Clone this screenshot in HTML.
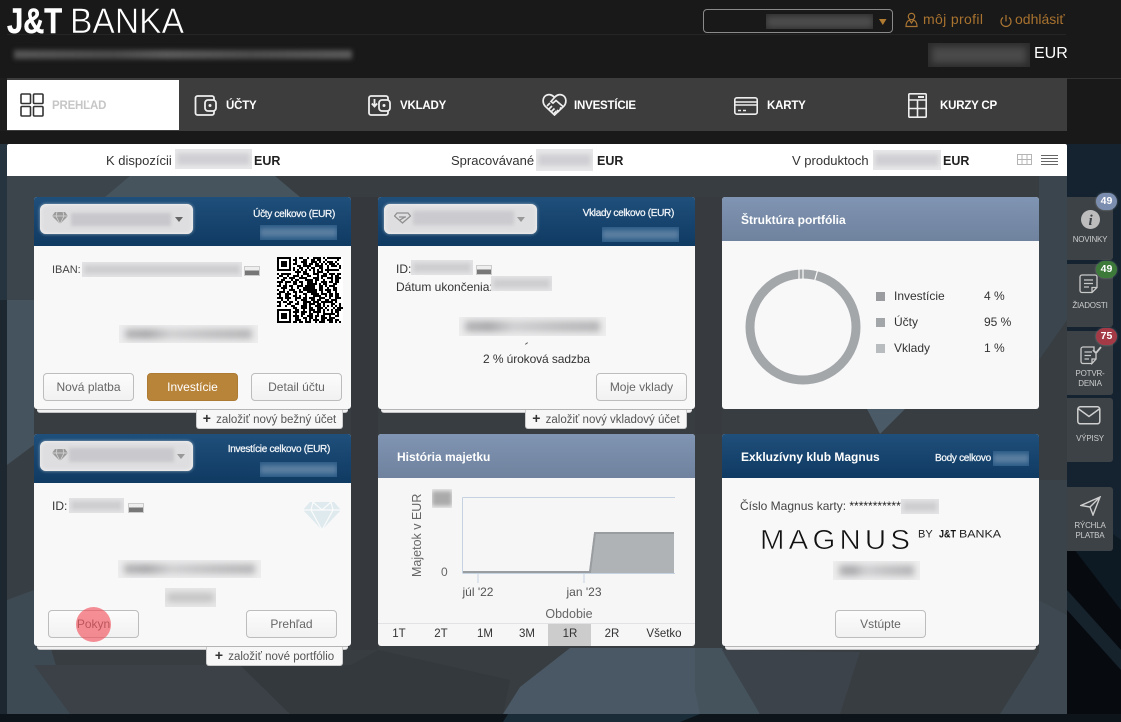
<!DOCTYPE html>
<html lang="sk"><head><meta charset="utf-8"><title>J&amp;T Banka</title>
<style>
*{box-sizing:border-box}
html,body{margin:0;padding:0;width:1121px;height:722px;overflow:hidden;background:#0e1a23}
body{position:relative;font-family:"Liberation Sans",sans-serif;font-size:12px;color:#333}
.a,.t,.btn,.b,.card,.tab{position:absolute}
.t{white-space:nowrap;line-height:18px}
.b{background:#e6e6e8;overflow:hidden}
.b i{position:absolute;left:6px;right:6px;top:22%;bottom:22%;background:linear-gradient(90deg,#b4b4b6,#a8a8aa 18%,#cfcfd1 36%,#bdbdbf 70%,#b4b4b6);filter:blur(3.5px);display:block}
.b.f i{top:22%;bottom:22%;left:2px;right:2px;background:#d2d2d5;filter:blur(2.5px)}
.b.h{background:#2a5a85}.b.h i{background:#5a7ea0;top:20%;bottom:20%;left:0;right:0;filter:blur(2.5px)}
.card{background:#f8f8f9;border-radius:3px}
.st{position:absolute;left:3px;right:3px;top:212px;height:4px;background:#f2f2f3;border-top:1px solid #b5b5b7;border-bottom:1px solid #c4c4c6;border-radius:0 0 3px 3px}
.hd{position:absolute;left:0;top:0;right:0;height:49px;background:linear-gradient(#1f4f7b,#0f3a62);border-radius:3px 3px 0 0}
.hg{position:absolute;left:0;top:0;right:0;height:44px;background:linear-gradient(#8095b3,#6f829e);border-radius:3px 3px 0 0}
.hb{height:44px}
.sel{position:absolute;left:6px;top:7px;width:153px;height:30px;background:#dedee0;border-radius:6px;box-shadow:inset 0 0 5px #f4f4f4,0 0 3px rgba(255,255,255,.55)}
.btn{height:28px;width:91px;border:1px solid #bdbdbd;border-radius:4px;background:linear-gradient(#fcfcfc,#f1f1f1);color:#666;font-size:12px;line-height:26px;text-align:center}
.tab{height:19px;background:#f7f7f8;border:1px solid #ccc;border-top:0;border-radius:0 0 3px 3px;color:#555;font-size:11.5px;line-height:17px;text-align:center;white-space:nowrap}
.tab b{color:#333;font-size:14px;font-weight:700;margin-right:2px}
.hr{font-size:10px;color:#f4f7fa;text-align:right;letter-spacing:-.3px;-webkit-text-stroke:.25px #f4f7fa}
.ht{font-size:12px;font-weight:700;color:#fff}
.nav{font-size:11.5px;font-weight:700;color:#fff;line-height:18px;letter-spacing:-.2px}
.sum{font-size:13px;color:#333;top:152px}
.eur{font-size:12.5px;font-weight:700;color:#222;top:152px}
.side{position:absolute;left:1067px;width:46px;background:#3d4246;border-radius:0 3px 3px 0;color:#ccc;font-size:8px;line-height:10px;text-align:center;letter-spacing:-.2px}
.bd{position:absolute;width:21px;height:17px;border-radius:9px;color:#fff;font-size:10.5px;font-weight:700;line-height:16px;text-align:center;box-shadow:0 0 2px rgba(255,255,255,.35)}
.per{font-size:11.5px;color:#333;text-align:center;width:42px;line-height:23px;height:23px}
.lg{font-size:12px;color:#333}
</style></head><body>

<!-- background -->
<svg class="a" style="left:0;top:0" width="1121" height="722" viewBox="0 0 1121 722">
<rect width="1121" height="722" fill="#0e1a23"/>
<polygon points="0,144 7,144 7,300 0,300" fill="#26343f"/>
<polygon points="0,300 7,300 7,722 0,722" fill="#1c2730"/>
<polygon points="1067,144 1121,144 1121,540 1067,500" fill="#14232f"/>
<polygon points="1067,540 1121,610 1121,722 1067,722" fill="#070b10"/>
<polygon points="1067,590 1121,650 1121,670 1067,610" fill="#16222c"/>
<rect x="0" y="714" width="1121" height="8" fill="#0d151b"/>
<polygon points="503,722 508,714 700,714 680,722" fill="#1a2c38"/>
<!-- panel -->
<rect x="7" y="144" width="1060" height="570" rx="3" fill="#383d41"/>
<polygon points="7,176 130,176 34,300 7,300" fill="#3c454c"/>
<polygon points="130,176 275,176 300,197 105,197" fill="#46545d"/>
<polygon points="7,300 34,300 34,445 7,465" fill="#45535e"/>
<polygon points="7,465 34,445 34,590 7,600" fill="#383f44"/>
<polygon points="7,600 34,590 70,714 7,714" fill="#3e4a53"/>
<polygon points="34,665 240,665 290,714 70,714" fill="#3b4147"/>
<polygon points="240,665 351,665 378,650 510,680 503,714 290,714" fill="#34393d"/>
<polygon points="351,197 378,197 378,650 351,650" fill="#35393d"/>
<polygon points="695,197 722,197 722,434 695,434" fill="#373b3f"/>
<polygon points="503,714 520,687 570,648 695,648 695,690 715,714" fill="#495864"/>
<polygon points="695,648 722,648 760,714 700,714 695,690" fill="#45535d"/>
<polygon points="760,714 722,650 860,652 840,714" fill="#3c434a"/>
<polygon points="1039,600 1067,615 1067,714 1000,714 1039,652" fill="#3d4850"/>
<polygon points="1039,176 1067,176 1067,320 1039,360" fill="#3b454d"/>
<polygon points="1039,480 1067,480 1067,615 1039,600" fill="#3a434a"/>
<polygon points="867,409 905,409 880,434" fill="#4a5a66"/>
</svg>

<!-- header -->
<div class="a" style="left:0;top:0;width:1121px;height:144px;background:#191919"></div>
<div class="a" style="left:7px;top:34px;width:1059px;height:1px;background:#252525"></div>
<svg class="a" style="left:0;top:0" width="200" height="44" viewBox="0 0 200 44">
<text x="7" y="33" font-family="Liberation Sans" font-weight="700" font-size="35" fill="#fff" stroke="#fff" stroke-width=".5" textLength="55" lengthAdjust="spacingAndGlyphs">J&amp;T</text>
<text x="70" y="33" font-family="Liberation Sans" font-size="35" fill="#fff" stroke="#191919" stroke-width=".6" textLength="114" lengthAdjust="spacingAndGlyphs">BANKA</text>
</svg>
<div class="a" style="left:14px;top:50px;width:338px;height:9px;background:linear-gradient(90deg,#555,#4a4a4a 30%,#5a5a5a 45%,#4c4c4c 70%,#595959);filter:blur(2.5px)"></div>
<div class="a" style="left:703px;top:9px;width:190px;height:24px;border:1px solid #8a8a8a;border-radius:4px;background:#191919"></div>
<div class="b" style="left:766px;top:14px;width:107px;height:15px;background:#2b2b2b"><i style="top:10%;bottom:10%;left:0;right:0;background:#4d4d4d"></i></div>
<svg class="a" style="left:878px;top:18px" width="10" height="8"><path d="M1 1h7.500L4.800 7z" fill="#b07a30"/></svg>
<svg class="a" style="left:905px;top:12px" width="13" height="16" viewBox="0 0 13 16" fill="none" stroke="#ab7633" stroke-width="1.2"><circle cx="6.500" cy="4.500" r="3.200"/><path d="M4.500 8C2 9 1 11 1 14.500h11C12 11 11 9 8.500 8L6.500 11z"/></svg>
<div class="t" style="left:923px;top:10px;font-size:14px;letter-spacing:.35px;color:#a8722f">môj profil</div>
<svg class="a" style="left:999px;top:14px" width="14" height="15" viewBox="0 0 14 15" fill="none" stroke="#ab7633" stroke-width="1.2"><path d="M4 3.500a5 5 0 1 0 6 0M7 1v6.500"/></svg>
<div class="t" style="left:1015px;top:10px;font-size:14px;color:#a8722f">odhlásiť</div>
<div class="b" style="left:928px;top:43px;width:102px;height:24px;background:#2c2c2c"><i style="left:4px;right:4px;top:15%;bottom:15%;background:#4a4a4a"></i></div>
<div class="t" style="left:1034px;top:45px;font-size:16px;color:#fff">EUR</div>

<!-- nav -->
<div class="a" style="left:0;top:78px;width:1121px;height:1px;background:#333"></div>
<div class="a" style="left:0;top:78px;width:1067px;height:53px;background:#3d3d3d"></div>
<div class="a" style="left:0;top:78px;width:7px;height:53px;background:#1d1d1d"></div>
<div class="a" style="left:7px;top:80px;width:172px;height:50px;background:#fff"></div>
<svg class="a" style="left:20px;top:93px" width="24" height="24" fill="none" stroke="#333" stroke-width="1.600"><rect x="1" y="1" width="9.500" height="9.500" rx="1"/><rect x="13.500" y="1" width="9.500" height="9.500" rx="1"/><rect x="1" y="13.500" width="9.500" height="9.500" rx="1"/><rect x="13.500" y="13.500" width="9.500" height="9.500" rx="1"/></svg>
<div class="t nav" style="left:52px;top:97px;color:#c6c6c6">PREHĽAD</div>
<svg class="a" style="left:194px;top:94px" width="24" height="23" fill="none" stroke="#eee" stroke-width="1.800"><path d="M20 6V4a2 2 0 0 0-2-2H3.500A2 2 0 0 0 1.500 4v15a2 2 0 0 0 2 2H18a2 2 0 0 0 2-2v-2"/><rect x="11" y="6" width="11" height="11" rx="3"/><circle cx="16" cy="11.500" r="1.500" fill="#eee" stroke="none"/></svg>
<div class="t nav" style="left:226px;top:97px">ÚČTY</div>
<svg class="a" style="left:368px;top:94px" width="24" height="23" fill="none" stroke="#eee" stroke-width="1.800"><path d="M20 6V4a2 2 0 0 0-2-2H3A2 2 0 0 0 1 4v15a2 2 0 0 0 2 2h15a2 2 0 0 0 2-2v-2"/><rect x="11" y="6" width="11" height="11" rx="3"/><circle cx="16" cy="11.500" r="1.500" fill="#eee" stroke="none"/><path d="M6.500 5v7M3.800 9.500l2.700 3 2.700-3"/></svg>
<div class="t nav" style="left:400px;top:97px">VKLADY</div>
<svg class="a" style="left:542px;top:93px" width="25" height="23" viewBox="0 0 25 23" fill="none" stroke="#eee" stroke-width="1.700"><path d="M12.500 4.500C10 1.500 6.500 .8 3.800 2.600 .6 4.800.2 9.500 3 13l9.500 9 9.500-9c2.800-3.500 2.400-8.200-.8-10.400-2.700-1.800-6.200-1.100-8.700 1.900L9 8.500l2 1.500 3-2.500 7 6"/><path d="M5 13l3-3M7 16l3-3M9.500 18.500l3-3M12 20.500l2.500-2.500M15 17l2 2M18 14.500l1.500 1.500"/></svg>
<div class="t nav" style="left:574px;top:97px">INVESTÍCIE</div>
<svg class="a" style="left:734px;top:97px" width="24" height="18" fill="none" stroke="#eee" stroke-width="1.600"><rect x=".8" y=".8" width="22.400" height="16.400" rx="2"/><path d="M1 5h22M1 8h22"/><path d="M4 13.500h3M9 13.500h3" stroke-width="1.500"/></svg>
<div class="t nav" style="left:767px;top:97px">KARTY</div>
<svg class="a" style="left:908px;top:93px" width="20" height="25" fill="none" stroke="#eee" stroke-width="1.600"><rect x=".8" y=".8" width="17.400" height="23.400" rx="1"/><path d="M1 7h17M1 15.500h17M9.500 7v17"/><path d="M10 4h6" stroke-width="2"/></svg>
<div class="t nav" style="left:940px;top:97px">KURZY CP</div>

<!-- sub bar -->
<div class="a" style="left:7px;top:144px;width:1060px;height:32px;background:#fff;border-radius:2px 2px 0 0"></div>
<div class="t sum" style="left:106px">K dispozícii</div>
<div class="b f" style="left:175px;top:149px;width:77px;height:20px;background:#e8e8ea"><i style="background:#d0d0d4"></i></div>
<div class="t eur" style="left:254px">EUR</div>
<div class="t sum" style="left:451px">Spracovávané</div>
<div class="b f" style="left:536px;top:149px;width:57px;height:22px;background:#e8e8ea"><i style="background:#d0d0d4"></i></div>
<div class="t eur" style="left:597px">EUR</div>
<div class="t sum" style="left:792px">V produktoch</div>
<div class="b f" style="left:873px;top:150px;width:68px;height:20px;background:#e8e8ea"><i style="background:#d0d0d4"></i></div>
<div class="t eur" style="left:943px">EUR</div>
<svg class="a" style="left:1017px;top:154px" width="15" height="11"><rect width="15" height="11" fill="#b4b4b4"/><path d="M1 1h3.500v4H1zM5.500 1h4v4h-4zM10.500 1H14v4h-3.500zM1 6h3.500v4H1zM5.500 6h4v4h-4zM10.500 6H14v4h-3.500z" fill="#fff"/></svg>
<svg class="a" style="left:1041px;top:155px" width="17" height="10" stroke="#666" stroke-width="1"><path d="M0 .5h17M0 3.500h17M0 6.500h17M0 9.500h17"/></svg>

<!-- CARD 1 -->
<div class="card" style="left:34px;top:197px;width:317px;height:212px">
 <div class="st"></div>
 <div class="hd"></div>
 <div class="sel"></div>
 <svg class="a" style="left:18px;top:15px" width="16" height="12" viewBox="0 0 16 12" fill="#9a9a9a"><path d="M3 0h10l3 4-8 8-8-8z"/><path d="M0 4h16M5 0L4 4l4 8 4-8-1-4" stroke="#ddd" stroke-width=".7" fill="none"/></svg>
 <div class="a" style="left:37px;top:16px;width:100px;height:13px;background:#c8c8cc;filter:blur(1.5px)"></div>
 <svg class="a" style="left:141px;top:20px" width="9" height="6"><path d="M0 0h8L4 5z" fill="#666"/></svg>
 <div class="t hr" style="right:16px;top:9px">Účty celkovo (EUR)</div>
 <div class="b h" style="left:226px;top:28px;width:77px;height:15px"><i></i></div>
 <div class="t" style="left:18px;top:64px;font-size:11px;color:#444">IBAN:</div>
 <div class="b f" style="left:48px;top:65px;width:160px;height:15px;background:#e4e4e6"><i style="background:#cdcdd0"></i></div>
 <div class="a" style="left:210px;top:69px;width:16px;height:10px;background:linear-gradient(#eee 45%,#777 45%);border:1px solid #ccc"></div>
 <svg class="a" style="left:243px;top:60px;background:#fff" width="66" height="66" viewBox="0 0 33 33" fill="none" shape-rendering="crispEdges"><path stroke="#000" d="M0 .5h7m2 0h1m1 0h2m2 0h1m2 0h4m1 0h1m1 0h7M0 1.500h1m5 0h1m1 0h2m3 0h2m2 0h2m1 0h2m2 0h1m5 0h1M0 2.500h1m1 0h3m1 0h1m2 0h1m2 0h3m2 0h3m1 0h1m1 0h1m1 0h3m1 0h1M0 3.500h1m1 0h3m1 0h1m1 0h2m3 0h2m1 0h2m1 0h2m1 0h1m1 0h1m1 0h3m1 0h1M0 4.500h1m1 0h3m1 0h1m3 0h2m1 0h4m2 0h4m2 0h1m1 0h3m1 0h1M0 5.500h1m5 0h1m1 0h1m2 0h2m2 0h1m1 0h2m2 0h2m2 0h1m5 0h1M0 6.500h7m1 0h1m1 0h1m1 0h1m1 0h1m1 0h1m1 0h1m1 0h1m1 0h1m1 0h7M9 7.500h3m1 0h2m3 0h1m1 0h3m2 0h1M0 8.500h1m1 0h5m3 0h1m2 0h3m2 0h3m2 0h2m1 0h3m1 0h2M1 9.500h2m2 0h1m2 0h3m1 0h1m2 0h2m3 0h1m1 0h3m2 0h1m1 0h2M0 10.500h1m2 0h2m1 0h3m2 0h4m3 0h3m1 0h1m2 0h3m1 0h3M2 11.500h2m3 0h1m1 0h2m3 0h4m1 0h2m2 0h1m3 0h1m1 0h2M0 12.500h3m1 0h3m1 0h2m1 0h2m2 0h3m1 0h1m2 0h3m1 0h2m1 0h2M1 13.500h1m2 0h1m3 0h2m2 0h1m2 0h5m1 0h1m1 0h2m3 0h2M0 14.500h2m1 0h2m1 0h2m2 0h3m1 0h5m2 0h2m1 0h1m1 0h3M2 15.500h3m2 0h1m2 0h1m2 0h6m2 0h2m2 0h1m2 0h2M0 16.500h1m2 0h1m2 0h3m2 0h1m1 0h7m1 0h2m1 0h3m1 0h2M1 17.500h3m1 0h1m2 0h2m1 0h2m2 0h5m2 0h1m2 0h2m2 0h1M0 18.500h2m2 0h3m2 0h1m3 0h2m2 0h4m1 0h3m1 0h2m1 0h2M1 19.500h1m2 0h2m2 0h2m1 0h1m2 0h1m3 0h4m2 0h1m1 0h2m1 0h2M0 20.500h3m1 0h3m2 0h3m1 0h2m1 0h3m2 0h3m2 0h1m2 0h3M2 21.500h1m2 0h1m3 0h1m2 0h3m2 0h2m1 0h2m2 0h2m1 0h3M0 22.500h2m1 0h2m1 0h2m2 0h1m2 0h4m1 0h3m1 0h6m1 0h1M1 23.500h1m3 0h2m2 0h2m2 0h2m1 0h3m1 0h2m1 0h1m3 0h2m2 0h1M0 24.500h2m2 0h1m2 0h2m3 0h3m1 0h1m2 0h3m1 0h1m1 0h1m1 0h1m1 0h1m1 0h1M8 25.500h2m2 0h3m1 0h2m2 0h3m1 0h1m3 0h1m1 0h3M0 26.500h7m2 0h2m2 0h1m2 0h3m1 0h2m1 0h1m1 0h1m1 0h1m1 0h3M0 27.500h1m5 0h1m1 0h3m1 0h3m1 0h1m1 0h4m1 0h1m3 0h1m1 0h2M0 28.500h1m1 0h3m1 0h1m2 0h1m2 0h2m2 0h2m2 0h1m2 0h6m1 0h1M0 29.500h1m1 0h3m1 0h1m1 0h3m1 0h1m2 0h3m1 0h2m1 0h2m2 0h1m2 0h2M0 30.500h1m1 0h3m1 0h1m2 0h2m2 0h2m1 0h2m1 0h1m2 0h3m1 0h3M0 31.500h1m5 0h1m2 0h3m2 0h1m1 0h1m1 0h3m1 0h2m1 0h3m1 0h2M0 32.500h7m1 0h2m1 0h2m1 0h3m2 0h1m1 0h3m2 0h2m1 0h1m1 0h1"/></svg>
 <div class="b" style="left:85px;top:128px;width:139px;height:18px;background:#eeeeef"><i></i></div>
 <div class="btn" style="left:9px;top:176px">Nová platba</div>
 <div class="btn" style="left:113px;top:176px;background:#b8843a;border-color:#ad7b34;color:#fff">Investície</div>
 <div class="btn" style="left:217px;top:176px">Detail účtu</div>
</div>
<div class="tab" style="left:196px;top:410px;width:147px"><b>+</b> založiť nový bežný účet</div>

<!-- CARD 2 -->
<div class="card" style="left:378px;top:197px;width:317px;height:212px">
 <div class="st"></div>
 <div class="hd"></div>
 <div class="sel"></div>
 <svg class="a" style="left:16px;top:15px" width="17" height="12" viewBox="0 0 17 12" fill="none" stroke="#8f8f8f" stroke-width="1.300"><path d="M3 1h11l2.500 3L8.500 11 .5 4zM5 5h7M6 8l5-3"/></svg>
 <div class="a" style="left:35px;top:14px;width:101px;height:14px;background:#cbcbcf;filter:blur(1.5px)"></div>
 <svg class="a" style="left:139px;top:20px" width="9" height="6"><path d="M0 0h8L4 5z" fill="#999"/></svg>
 <div class="t hr" style="right:21px;top:8px">Vklady celkovo (EUR)</div>
 <div class="b h" style="left:224px;top:30px;width:77px;height:15px"><i></i></div>
 <div class="t" style="left:18px;top:63px;font-size:12px;color:#333">ID:</div>
 <div class="b f" style="left:33px;top:63px;width:62px;height:15px;background:#e4e4e6"><i style="background:#cdcdd0"></i></div>
 <div class="a" style="left:98px;top:68px;width:16px;height:10px;background:linear-gradient(#eee 45%,#777 45%);border:1px solid #ccc"></div>
 <div class="t" style="left:18px;top:81px;font-size:12px;color:#333">Dátum ukončenia:</div>
 <div class="b f" style="left:113px;top:79px;width:61px;height:15px;background:#e4e4e6"><i style="background:#cdcdd0"></i></div>
 <div class="b" style="left:81px;top:120px;width:147px;height:19px;background:#eeeeef"><i></i></div>
 <div class="a" style="left:147px;top:146px;width:3px;height:1px;background:#555;transform:rotate(-35deg)"></div>
 <div class="t" style="left:0;width:317px;text-align:center;top:153px;font-size:12px;letter-spacing:-.1px;color:#333">2 % úroková sadzba</div>
 <div class="btn" style="left:218px;top:176px">Moje vklady</div>
</div>
<div class="tab" style="left:525px;top:410px;width:162px"><b>+</b> založiť nový vkladový účet</div>

<!-- CARD 3 -->
<div class="card" style="left:722px;top:197px;width:317px;height:212px">
 <div class="hg"></div>
 <div class="t ht" style="left:19px;top:14px">Štruktúra portfólia</div>
 <svg class="a" style="left:19px;top:72px" width="124" height="120" viewBox="0 0 124 120">
  <circle cx="62" cy="58" r="53" fill="none" stroke="#a3a7aa" stroke-width="9"/>
  <path d="M58 0v11M62 0v11M77 0l-3.500 12" stroke="#fbfbfb" stroke-width="1.200"/>
 </svg>
 <div class="a" style="left:154px;top:95px;width:9px;height:9px;background:#9a9c9f"></div>
 <div class="a" style="left:154px;top:121px;width:9px;height:9px;background:#a3a6a9"></div>
 <div class="a" style="left:154px;top:147px;width:9px;height:9px;background:#b9bcbf"></div>
 <div class="t lg" style="left:172px;top:90px">Investície</div>
 <div class="t lg" style="left:172px;top:116px">Účty</div>
 <div class="t lg" style="left:172px;top:142px">Vklady</div>
 <div class="t lg" style="left:262px;top:90px">4 %</div>
 <div class="t lg" style="left:262px;top:116px">95 %</div>
 <div class="t lg" style="left:262px;top:142px">1 %</div>
</div>

<!-- CARD 4 -->
<div class="card" style="left:34px;top:434px;width:317px;height:212px">
 <div class="st"></div>
 <div class="hd"></div>
 <div class="sel"></div>
 <svg class="a" style="left:18px;top:15px" width="16" height="12" viewBox="0 0 16 12" fill="#9a9a9a"><path d="M3 0h10l3 4-8 8-8-8z"/><path d="M0 4h16M5 0L4 4l4 8 4-8-1-4" stroke="#ddd" stroke-width=".7" fill="none"/></svg>
 <div class="a" style="left:35px;top:14px;width:105px;height:14px;background:#c9c9cd;filter:blur(1.5px)"></div>
 <svg class="a" style="left:143px;top:20px" width="9" height="6"><path d="M0 0h8L4 5z" fill="#999"/></svg>
 <div class="t hr" style="right:21px;top:7px">Investície celkovo (EUR)</div>
 <div class="b h" style="left:226px;top:28px;width:77px;height:15px"><i></i></div>
 <div class="t" style="left:18px;top:63px;font-size:12px;color:#333">ID:</div>
 <div class="b f" style="left:35px;top:64px;width:55px;height:15px;background:#e4e4e6"><i style="background:#cdcdd0"></i></div>
 <div class="a" style="left:94px;top:69px;width:16px;height:10px;background:linear-gradient(#eee 45%,#777 45%);border:1px solid #ccc"></div>
 <svg class="a" style="left:269px;top:68px" width="38" height="28" viewBox="0 0 38 28" fill="#dfeaee"><path d="M7 0h24l7 8-19 20L0 8z"/><path d="M0 8h38M10 0L8 8l11 20 11-20-2-8M10 0l9 8 9-8" stroke="#fafbfb" stroke-width="1.200" fill="none"/></svg>
 <div class="b" style="left:84px;top:126px;width:143px;height:18px;background:#eeeeef"><i></i></div>
 <div class="b" style="left:131px;top:154px;width:51px;height:19px;background:#e8e8e9"><i style="background:#c2c2c2;left:2px;right:2px;top:25%;bottom:25%"></i></div>
 <div class="btn" style="left:14px;top:176px">Pokyn</div>
 <div class="btn" style="left:212px;top:176px">Prehľad</div>
 <div class="a" style="left:42px;top:173px;width:35px;height:35px;border-radius:50%;background:rgba(240,75,85,.62)"></div>
</div>
<div class="tab" style="left:206px;top:647px;width:137px"><b>+</b> založiť nové portfólio</div>

<!-- CARD 5 -->
<div class="card" style="left:378px;top:434px;width:317px;height:212px;background:#f6f6f7">
 <div class="hg"></div>
 <div class="t ht" style="left:19px;top:14px">História majetku</div>
 <svg class="a" style="left:0;top:44px" width="317" height="145" viewBox="0 44 317 145">
  <path d="M84.500 63.500H297M84.500 63.500V139M84.500 139.500H297" stroke="#c5d2e2" stroke-width="1" fill="none"/>
  <path d="M100 139v10M206 139v10" stroke="#c5d2e2" fill="none"/>
  <path d="M85 138h126l5-39h80v40H85z" fill="#b0b3b5"/>
  <path d="M85 138h127l5-39h79" fill="none" stroke="#9a9da0" stroke-width="2"/>
 </svg>
 <div class="b" style="left:54px;top:55px;width:20px;height:19px;background:#ececed"><i style="left:0;right:0;top:10%;bottom:10%;background:#aaa;filter:blur(2px)"></i></div>
 <svg class="a" style="left:30px;top:58px" width="18" height="88"><text transform="translate(13,85) rotate(-90)" font-size="12.5" fill="#666" font-family="Liberation Sans,sans-serif">Majetok v EUR</text></svg>
 <div class="t" style="left:63px;top:129px;font-size:12px;color:#666">0</div>
 <div class="t" style="left:70px;width:60px;text-align:center;top:149px;font-size:12px;color:#555">júl '22</div>
 <div class="t" style="left:176px;width:60px;text-align:center;top:149px;font-size:12px;color:#555">jan '23</div>
 <div class="t" style="left:151px;width:80px;text-align:center;top:171px;font-size:12.5px;color:#666">Obdobie</div>
 <div class="a" style="left:0;right:0;top:189px;height:1px;background:#e2e2e4"></div>
 <div class="a" style="left:170px;top:190px;width:43px;height:22px;background:#cccccc"></div>
 <div class="t per" style="left:0;top:189px">1T</div>
 <div class="t per" style="left:42px;top:189px">2T</div>
 <div class="t per" style="left:86px;top:189px">1M</div>
 <div class="t per" style="left:128px;top:189px">3M</div>
 <div class="t per" style="left:171px;top:189px">1R</div>
 <div class="t per" style="left:213px;top:189px">2R</div>
 <div class="t per" style="left:265px;top:189px">Všetko</div>
</div>

<!-- CARD 6 -->
<div class="card" style="left:722px;top:434px;width:317px;height:212px">
 <div class="st"></div>
 <div class="hd hb"></div>
 <div class="t ht" style="left:19px;top:14px">Exkluzívny klub Magnus</div>
 <div class="t hr" style="left:213px;top:16px;text-align:left">Body celkovo</div>
 <div class="b h" style="left:271px;top:17px;width:36px;height:15px"><i></i></div>
 <div class="t" style="left:18px;top:63px;font-size:12px;color:#444">Číslo Magnus karty: <span style="color:#222">*************</span></div>
 <div class="b f" style="left:179px;top:65px;width:38px;height:15px;background:#e4e4e6"><i style="background:#cdcdd0"></i></div>
 <svg class="a" style="left:30px;top:90px" width="260" height="30">
  <text transform="translate(8,25) scale(1.05,1)" font-family="Liberation Sans" font-size="28" letter-spacing="4" fill="#111" stroke="#f8f8f9" stroke-width=".6">MAGNUS</text>
  <text x="166" y="13.500" font-family="Liberation Sans" font-size="11" fill="#222">BY</text>
  <text x="187" y="13.500" font-family="Liberation Sans" font-weight="700" font-size="11" fill="#111" textLength="17" lengthAdjust="spacingAndGlyphs">J&amp;T</text>
  <text x="207" y="13.500" font-family="Liberation Sans" font-size="11" fill="#222" textLength="42" lengthAdjust="spacingAndGlyphs">BANKA</text>
 </svg>
 <div class="b" style="left:111px;top:127px;width:87px;height:19px;background:#eeeeef"><i></i></div>
 <div class="btn" style="left:113px;top:176px">Vstúpte</div>
</div>

<!-- sidebar -->
<div class="side" style="top:197px;height:63px"><svg style="position:absolute;left:14px;top:13px" width="19" height="19"><circle cx="9.500" cy="9.500" r="9.500" fill="#bdbdbd"/><text x="9.500" y="15" text-anchor="middle" font-family="Liberation Serif" font-style="italic" font-weight="700" font-size="15" fill="#3d4246">i</text></svg><div style="position:absolute;left:0;right:0;top:38px">NOVINKY</div></div>
<div class="side" style="top:264px;height:63px"><svg style="position:absolute;left:12px;top:10px" width="20" height="20" fill="none" stroke="#c9c9c9" stroke-width="1.300"><path d="M13 18.500H3a2 2 0 0 1-2-2V3a2 2 0 0 1 2-2h13a2 2 0 0 1 2 2v10.500zM13 18.500V13.500h5M5 6h9M5 9.500h9M5 13h5"/></svg><div style="position:absolute;left:0;right:0;top:37px">ŽIADOSTI</div></div>
<div class="side" style="top:331px;height:64px"><svg style="position:absolute;left:13px;top:14px" width="22" height="20" fill="none" stroke="#c9c9c9" stroke-width="1.300"><path d="M12 18.500H3a2 2 0 0 1-2-2V4a2 2 0 0 1 2-2h11v4M16 9v5l-4 4.500V14h4M4.500 7H12M4.500 10.500H11M4.500 14H9"/><path d="M13 5l3 3 5-6" stroke-width="1.800"/></svg><div style="position:absolute;left:0;right:0;top:38px">POTVR-<br>DENIA</div></div>
<div class="side" style="top:398px;height:64px"><svg style="position:absolute;left:10px;top:8px" width="24" height="19" fill="none" stroke="#d0d0d0" stroke-width="1.500"><rect x=".8" y=".8" width="22" height="17" rx="2.500"/><path d="M1 2.500l11 8 11-8"/></svg><div style="position:absolute;left:0;right:0;top:36px">VÝPISY</div></div>
<div class="side" style="top:487px;height:64px"><svg style="position:absolute;left:13px;top:9px" width="22" height="20" fill="none" stroke="#cfcfcf" stroke-width="1.400"><path d="M20 1L1 9.500l9 1.500 3 8zM10 11L20 1"/></svg><div style="position:absolute;left:0;right:0;top:34px">RÝCHLA<br>PLATBA</div></div>
<div class="bd" style="left:1096px;top:193px;background:#7c8eb0">49</div>
<div class="bd" style="left:1096px;top:261px;background:#3d7a3a">49</div>
<div class="bd" style="left:1096px;top:328px;background:#a53a47">75</div>
</body></html>
